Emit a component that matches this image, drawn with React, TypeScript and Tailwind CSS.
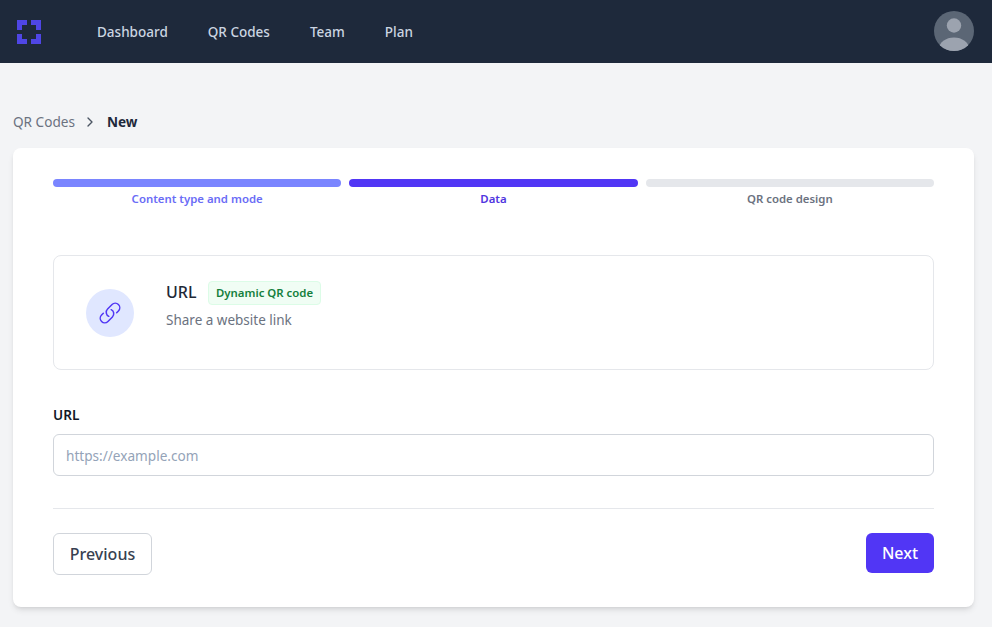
import React from 'react';
import { ChevronRight } from 'lucide-react';

const font = "font-['Noto_Sans',sans-serif]";

const navItems = ['Dashboard', 'QR Codes', 'Team', 'Plan'];

const steps = [
    { label: 'Content type and mode', bar: 'bg-[#7a85ff]', text: 'text-[#6a6cf6]' },
    { label: 'Data', bar: 'bg-[#5136f5]', text: 'text-[#4f35e0]' },
    { label: 'QR code design', bar: 'bg-[#e5e7eb]', text: 'text-[#6b7280]' },
];

export default function App() {
    return (
        <div className={`${font} min-h-[627px] bg-[#f3f4f6]`}>
            {/* NAV */}
            <nav className="h-[63px] bg-[#1e293b] flex items-center pt-[1px] pl-[17px] pr-[18px]">
                <svg width="24" height="24" viewBox="0 0 24 24" fill="#4f46e5" className="mr-[56px]">
                    <path d="M0 0h10v5H5v5H0zM14 0h10v10h-5V5h-5zM0 14h5v5h5v5H0zM19 14h5v10H14v-5h5z" />
                </svg>
                <div className="flex gap-[40px] text-[13.5px] leading-[20px] font-medium text-[#cbd5e1]">
                    {navItems.map((item) => (
                        <span key={item}>{item}</span>
                    ))}
                </div>
                <div className="ml-auto mb-[2px] w-[40px] h-[40px] rounded-full bg-[#5b6675] overflow-hidden">
                    <svg viewBox="0 0 40 40" className="w-full h-full" fill="#9ca3af">
                        <circle cx="20" cy="14.5" r="7.2" />
                        <ellipse cx="20" cy="38" rx="15" ry="11.5" />
                    </svg>
                </div>
            </nav>

            <main className="pl-[13px] pr-[18px] pt-[49px]">
                {/* BREADCRUMB */}
                <div className="flex items-center h-[20px] text-[13.6px]">
                    <span className="text-[#6b7280]">QR Codes</span>
                    <ChevronRight className="w-[16px] h-[16px] ml-[7px] mr-[9px] text-[#4b5563]" />
                    <span className="font-bold text-[#1e293b]">New</span>
                </div>

                {/* CARD */}
                <div className="mt-[16px] bg-white rounded-[8px] shadow-md px-[40px] pt-[31px] pb-[32px]">
                    <div className="grid grid-cols-3 gap-[8px]">
                        {steps.map((step) => (
                            <div key={step.label}>
                                <div className={`h-[8px] rounded-full ${step.bar}`}></div>
                                <div className={`mt-[3px] text-center text-[11.4px] leading-[18px] font-semibold ${step.text}`}>
                                    {step.label}
                                </div>
                            </div>
                        ))}
                    </div>

                    {/* SELECTED TYPE */}
                    <div className="mt-[47px] h-[115px] border border-[#e5e7eb] rounded-[8px] flex items-center pl-[32px]">
                        <div className="w-[48px] h-[48px] rounded-full bg-[#e0e7ff] flex items-center justify-center">
                            <svg viewBox="0 0 24 24" fill="none" stroke="#5136f5" strokeWidth="1.5" strokeLinecap="round" strokeLinejoin="round" className="w-[24px] h-[24px]">
                                <path d="M13.19 8.688a4.5 4.5 0 0 1 1.242 7.244l-4.5 4.5a4.5 4.5 0 0 1-6.364-6.364l1.757-1.757m13.35-.622 1.757-1.757a4.5 4.5 0 0 0-6.364-6.364l-4.5 4.5a4.5 4.5 0 0 0 1.242 7.244" />
                            </svg>
                        </div>
                        <div className="ml-[32px] mb-[14px]">
                            <div className="flex items-start">
                                <span className="text-[16px] leading-[22px] font-medium text-[#1f2937]">URL</span>
                                <span className="ml-[12px] h-[24px] px-[6.5px] flex items-center text-[11.4px] font-semibold text-[#15803d] bg-[#f0fdf4] border border-[#dcfce7] rounded-[4px]">
                                    Dynamic QR code
                                </span>
                            </div>
                            <div className="mt-[5px] text-[13.5px] leading-[20px] text-[#6b7280]">Share a website link</div>
                        </div>
                    </div>

                    {/* URL FIELD */}
                    <label className="block mt-[35px] text-[13.6px] leading-[20px] font-semibold text-[#111827]">URL</label>
                    <input
                        className="mt-[9px] block w-full h-[42px] px-[12px] border border-[#d1d5db] rounded-[6px] text-[13.6px] outline-none placeholder:text-[#94a3b8]"
                        placeholder="https://example.com"
                    />

                    <div className="mt-[32px] border-t border-[#e5e7eb]"></div>

                    {/* ACTIONS */}
                    <div className="mt-[24px] flex items-start justify-between">
                        <button className="w-[99px] h-[42px] bg-white border border-[#d1d5db] rounded-[6px] text-[16px] font-medium text-[#374151]">
                            Previous
                        </button>
                        <button className="w-[68px] h-[40px] bg-[#5136f5] rounded-[6px] text-[16px] font-medium text-white">
                            Next
                        </button>
                    </div>
                </div>
            </main>
        </div>
    );
}
